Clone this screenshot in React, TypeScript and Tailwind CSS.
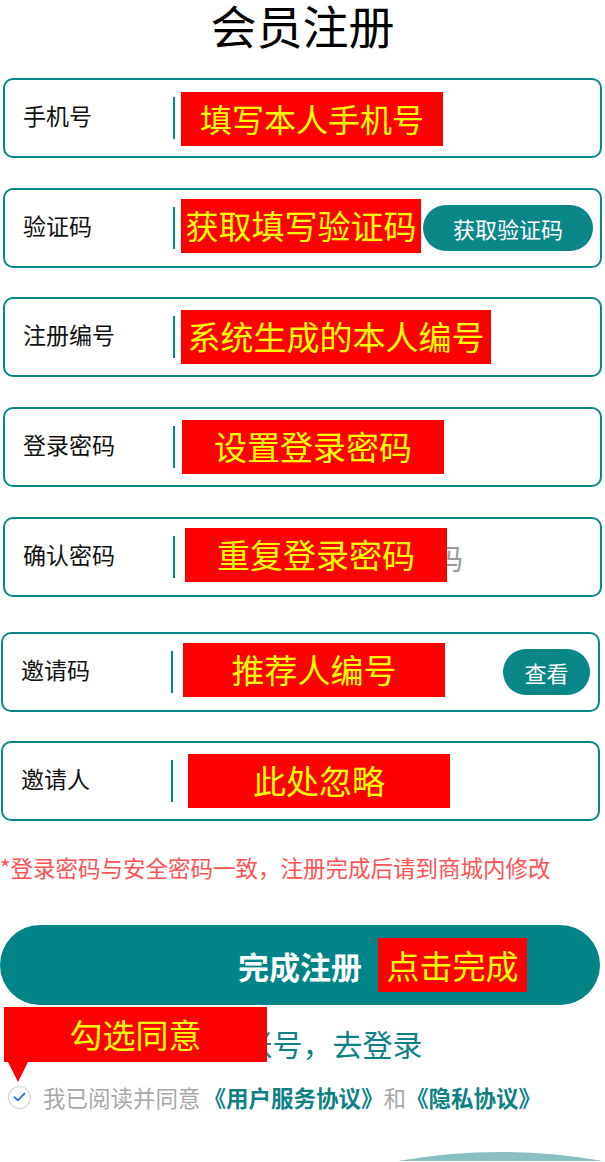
import React from 'react';

const teal = 'bg-[#0a8588]';

type Row = {
  label: string;
  note: string;
  boxClass: string;
  noteClass: string;
  rowClass: string;
  hint?: string;
  action?: string;
  actionClass?: string;
};

const rows: Row[] = [
  {
    label: '手机号',
    note: '填写本人手机号',
    rowClass: 'ml-[3px] w-[599px]',
    boxClass: 'left-[176px] top-[12px] w-[262px]',
    noteClass: 'text-[32px]',
  },
  {
    label: '验证码',
    note: '获取填写验证码',
    rowClass: 'mt-[30px] ml-[3px] w-[599px]',
    boxClass: 'left-[176px] top-[9px] w-[240px]',
    noteClass: 'text-[33px]',
    action: '获取验证码',
    actionClass: 'w-[170px] mr-[7px]',
  },
  {
    label: '注册编号',
    note: '系统生成的本人编号',
    rowClass: 'mt-[29px] ml-[3px] w-[599px]',
    boxClass: 'left-[176px] top-[11px] w-[310px]',
    noteClass: 'text-[33px]',
  },
  {
    label: '登录密码',
    note: '设置登录密码',
    rowClass: 'mt-[30px] ml-[3px] w-[599px]',
    boxClass: 'left-[177px] top-[11px] w-[262px]',
    noteClass: 'text-[33px]',
  },
  {
    label: '确认密码',
    note: '重复登录密码',
    rowClass: 'mt-[30px] ml-[3px] w-[599px]',
    boxClass: 'left-[180px] top-[9px] w-[262px]',
    noteClass: 'text-[33px]',
    hint: '请确认登录密码',
  },
  {
    label: '邀请码',
    note: '推荐人编号',
    rowClass: 'mt-[35px] ml-[1px] w-[599px]',
    boxClass: 'left-[180px] top-[9px] w-[262px]',
    noteClass: 'text-[33px]',
    action: '查看',
    actionClass: 'w-[87px] mr-[8px]',
  },
  {
    label: '邀请人',
    note: '此处忽略',
    rowClass: 'mt-[29px] ml-[1px] w-[599px]',
    boxClass: 'left-[185px] top-[11px] w-[262px]',
    noteClass: 'text-[33px]',
  },
];

function FieldRow({ row }: { row: Row }) {
  return (
    <div
      className={`relative h-[80px] border-2 border-[#0a8588] rounded-[10px] flex items-center ${row.rowClass}`}
    >
      <div className="w-[168px] pl-[18px] pb-[6px] text-[23px] text-[#111] leading-none">{row.label}</div>
      <div className={`w-[2px] h-[42px] ${teal}`} />
      <div className="flex-1 h-full flex items-center pl-[10px]">
        {row.hint && (
          <span className="ml-[75px] text-[29px] text-[#999] leading-none">{row.hint}</span>
        )}
      </div>
      {row.action && (
        <button
          className={`h-[46px] rounded-full ${teal} text-white text-[22px] leading-none flex items-center justify-center ${row.actionClass}`}
        >
          {row.action}
        </button>
      )}
      <div
        className={`absolute h-[54px] pb-[2px] bg-[#ff0000] text-[#ffff00] flex items-center justify-center leading-none whitespace-nowrap ${row.boxClass} ${row.noteClass}`}
      >
        {row.note}
      </div>
    </div>
  );
}

export default function App() {
  return (
    <div
      className="relative w-[605px] h-[1162px] overflow-hidden bg-white"
      style={{ fontFamily: '"Noto Sans CJK SC", "Noto Sans", sans-serif' }}
    >
      <h1 className="h-[50px] pt-[1px] text-center text-[46px] leading-[46px] text-black font-normal">会员注册</h1>

      <div className="mt-[28px] flex flex-col">
        {rows.map((r) => (
          <FieldRow key={r.label} row={r} />
        ))}
      </div>

      <p className="mt-[31px] text-[22.5px] leading-[30px] text-[#ff5252] whitespace-nowrap">
        *登录密码与安全密码一致，注册完成后请到商城内修改
      </p>

      <div className="relative mt-[43px] w-[600px] h-[80px] rounded-full bg-[#008487] flex items-center justify-center">
        <span className="text-white text-[31px] font-bold leading-none">完成注册</span>
        <div className="absolute left-[378px] top-[13px] w-[149px] h-[54px] bg-[#ff0000] text-[#ffff00] text-[33px] leading-none flex items-center justify-center">
          点击完成
        </div>
      </div>

      <div className="relative mt-[20px]">
        <p className="text-center text-[30px] leading-[36px] text-[#0f8185]">已有账号，去登录</p>
        <div className="absolute left-[4px] -top-[18px] w-[263px] h-[55px] bg-[#ff0000] text-[#ffff00] text-[33px] leading-none flex items-center justify-center">
          勾选同意
          <div className="absolute left-[4px] top-[55px] w-0 h-0 border-l-[10px] border-r-[10px] border-t-[20px] border-l-transparent border-r-transparent border-t-[#ff0000]" />
        </div>
      </div>

      <div className="mt-[21px] flex items-center h-[30px] pl-[8px] text-[22.5px] leading-none whitespace-nowrap">
        <span className="w-[23px] h-[23px] rounded-full border-[1.5px] border-[#c8c8c8] flex items-center justify-center">
          <svg width="13" height="10" viewBox="0 0 13 10">
            <path d="M1.5 5.2 L4.8 8.3 L11.5 1.5" fill="none" stroke="#2d6ee0" strokeWidth="1.8" strokeLinecap="round" strokeLinejoin="round" />
          </svg>
        </span>
        <span className="ml-[12px] text-[#a8a8a8]">我已阅读并同意</span>
        <span className="ml-[3px] font-bold text-[#0f8185]">《用户服务协议》</span>
        <span className="text-[#a8a8a8]">和</span>
        <span className="font-bold text-[#0f8185]">《隐私协议》</span>
      </div>

      <div className="mt-[35px] flex justify-end pr-[2px]">
        <svg width="205" height="14" viewBox="0 0 205 14">
          <path d="M0 14 Q102 -4 205 14 Z" fill="#8abfc1" />
        </svg>
      </div>
    </div>
  );
}
